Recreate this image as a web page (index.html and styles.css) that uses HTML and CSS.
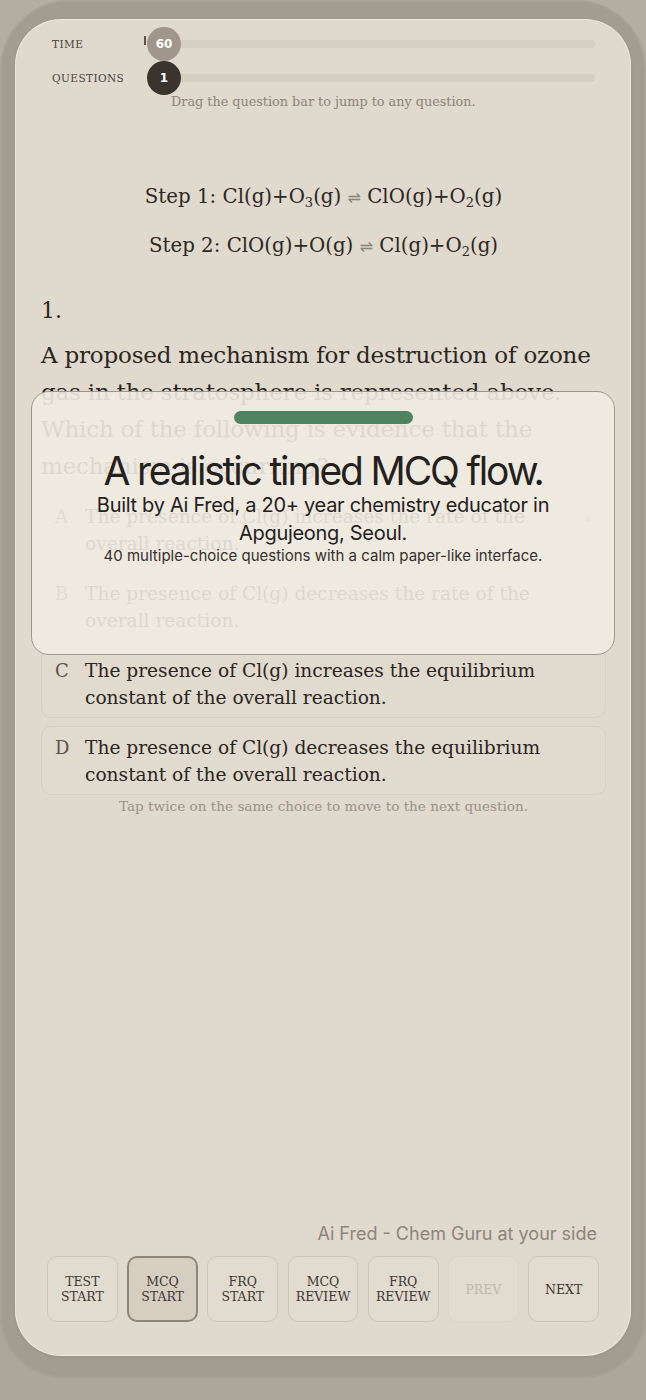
FILE: index.html
```html
<!DOCTYPE html>
<html lang="en">
<head>
<meta charset="utf-8">
<title>MCQ Flow</title>
<link rel="stylesheet" href="styles.css">
</head>
<body>
<div class="shell">
  <main class="card">
    <section class="meters">
      <div class="meter-row">
        <span class="meter-label">Time</span>
        <div class="track"><span class="tick"></span><span class="thumb thumb-time">60</span></div>
      </div>
      <div class="meter-row">
        <span class="meter-label">Questions</span>
        <div class="track"><span class="thumb thumb-q">1</span></div>
      </div>
      <p class="hint">Drag the question bar to jump to any question.</p>
    </section>

    <section class="equations">
      <p>Step 1: Cl(g)+O<sub>3</sub>(g) <span class="eq">&#8652;</span> ClO(g)+O<sub>2</sub>(g)</p>
      <p>Step 2: ClO(g)+O(g) <span class="eq">&#8652;</span> Cl(g)+O<sub>2</sub>(g)</p>
    </section>

    <p class="qnum">1.</p>
    <p class="qtext">A proposed mechanism for destruction of ozone gas in the stratosphere is represented above. Which of the following is evidence that the mechanism is occurring?</p>

    <ul class="choices">
      <li class="choice"><span class="letter">A</span><span class="ctext">The presence of Cl(g) increases the rate of the overall reaction.</span><span class="dot"></span></li>
      <li class="choice"><span class="letter">B</span><span class="ctext">The presence of Cl(g) decreases the rate of the overall reaction.</span></li>
      <li class="choice"><span class="letter">C</span><span class="ctext">The presence of Cl(g) increases the equilibrium constant of the overall reaction.</span></li>
      <li class="choice"><span class="letter">D</span><span class="ctext">The presence of Cl(g) decreases the equilibrium constant of the overall reaction.</span></li>
    </ul>
    <p class="tap">Tap twice on the same choice to move to the next question.</p>

    <footer class="foot">
      <p class="brand">Ai Fred - Chem Guru at your side</p>
      <nav class="buttons">
        <button class="btn">Test<br>Start</button>
        <button class="btn active">MCQ<br>Start</button>
        <button class="btn">FRQ<br>Start</button>
        <button class="btn">MCQ<br>Review</button>
        <button class="btn">FRQ<br>Review</button>
        <button class="btn disabled">Prev</button>
        <button class="btn">Next</button>
      </nav>
    </footer>

    <div class="overlay">
      <div class="bar"></div>
      <h1 class="o-title">A realistic timed MCQ flow.</h1>
      <p class="o-sub">Built by Ai Fred, a 20+ year chemistry educator in Apgujeong, Seoul.</p>
      <p class="o-small">40 multiple-choice questions with a calm paper-like interface.</p>
    </div>
  </main>
</div>
</body>
</html>
```
FILE: styles.css
```css
* { box-sizing: border-box; }
html, body { margin: 0; padding: 0; }
body {
  width: 646px;
  height: 1400px;
  background: linear-gradient(180deg, #b4ada2 0%, #aca599 60%, #ada69a 100%);
  font-family: "DejaVu Serif", "Liberation Serif", serif;
  color: #2d2824;
  overflow: hidden;
}
p { margin: 0; }

.shell {
  width: 646px;
  height: 1378px;
  background: #a39c90;
  border-radius: 0 0 62px 62px;
  border-top-left-radius: 70px;
  border-top-right-radius: 70px;
  padding: 19px 15px 22px 15px;
  box-shadow: inset 0 0 0 2px rgba(255,255,255,0.06);
}

.card {
  position: relative;
  height: 1337px;
  background: #e0d9cd;
  border-radius: 46px;
  padding: 8px 25px 34px 26px;
  display: flex;
  flex-direction: column;
  box-shadow: inset 0 0 0 1px rgba(255,255,255,0.35), 0 1px 3px rgba(0,0,0,0.08);
}

/* meters */
.meters { padding-left: 11px; }
.meter-row {
  display: grid;
  grid-template-columns: 93px 1fr;
  align-items: center;
  height: 34px;
}
.meter-label {
  font-size: 10.5px;
  text-transform: uppercase;
  letter-spacing: 0.04em;
  color: #4a433d;
}
.track {
  position: relative;
  height: 8px;
  margin-left: 4px;
  margin-right: 11px;
  border-radius: 4px;
  background: #d5cec2;
}
.tick {
  position: absolute;
  left: -5px;
  top: -4px;
  width: 2px;
  height: 9px;
  background: #5d554d;
}
.thumb {
  position: absolute;
  left: -2px;
  top: 50%;
  width: 34px;
  height: 34px;
  margin-top: -17px;
  border-radius: 50%;
  display: flex;
  align-items: center;
  justify-content: center;
  color: #fff;
  font-family: "DejaVu Sans", "Liberation Sans", sans-serif;
  font-weight: bold;
  font-size: 12px;
}
.thumb-time { background: #a1968b; }
.thumb-q { background: #3b332e; }
.hint {
  margin-left: 119px;
  font-size: 12.8px;
  line-height: 14px;
  color: #8c847a;
}

/* equations */
.equations {
  margin-top: 64px;
  text-align: center;
  font-size: 19.8px;
  line-height: 48px;
  color: #2d2824;
}
.equations sub { font-size: 13px; line-height: 0; vertical-align: -4px; }
.eq { color: #8a837a; font-family: "DejaVu Sans", sans-serif; font-size: 16px; }

.qnum {
  margin-top: 25px;
  font-size: 22px;
  line-height: 30px;
}
.qtext {
  margin-top: 11px;
  font-size: 23px;
  line-height: 37px;
  letter-spacing: -0.2px;
  color: #2a2521;
}

/* choices */
.choices {
  list-style: none;
  margin: 10px 0 0 0;
  padding: 0;
  display: flex;
  flex-direction: column;
  gap: 8px;
}
.choice {
  display: flex;
  align-items: flex-start;
  height: 69px;
  padding: 7px 13px;
  border: 1px solid #d6cfc3;
  border-radius: 10px;
  background: #e1dace;
}
.letter {
  width: 30px;
  flex: none;
  font-size: 18px;
  line-height: 27px;
  color: #5a524a;
}
.ctext {
  flex: 1;
  font-size: 18.6px;
  line-height: 27px;
  color: #2a2521;
  padding-right: 10px;
}
.dot {
  flex: none;
  width: 6px;
  height: 6px;
  margin-top: 13px;
  margin-right: 1px;
  border-radius: 50%;
  background: #b9b1a6;
}
.tap {
  margin-top: 3px;
  text-align: center;
  font-size: 13.6px;
  line-height: 16px;
  color: #9a9288;
}

/* footer */
.foot { margin-top: auto; }
.brand {
  text-align: right;
  padding-right: 9px;
  font-family: Inter, "Liberation Sans", sans-serif;
  font-size: 18px;
  line-height: 20px;
  color: #8d857b;
}
.buttons {
  margin: 12px 7px 0 6px;
  display: grid;
  grid-template-columns: repeat(7, 1fr);
  gap: 9.5px;
}
.btn {
  height: 66px;
  padding: 0;
  border: 1px solid #cdc5b9;
  border-radius: 10px;
  background: #e2dbcf;
  font-family: "DejaVu Serif", "Liberation Serif", serif;
  font-size: 12.5px;
  line-height: 15px;
  text-transform: uppercase;
  color: #3f3833;
}
.btn.active {
  background: #d6cec1;
  border: 2px solid #8f867b;
}
.btn.disabled {
  color: #bfb7ac;
  border-color: #dbd4c8;
}

/* overlay */
.overlay {
  position: absolute;
  left: 16px;
  top: 372px;
  width: 584px;
  height: 264px;
  padding-top: 19px;
  border: 1px solid #9d968b;
  border-radius: 18px;
  background: rgba(239, 235, 226, 0.9);
  text-align: center;
  font-family: Inter, "Liberation Sans", sans-serif;
  color: #24201d;
}
.bar {
  width: 179px;
  height: 13px;
  margin: 0 auto;
  border-radius: 7px;
  background: #4e8462;
}
.o-title {
  margin: 27px 0 0 0;
  font-size: 39px;
  line-height: 40px;
  font-weight: 400;
  letter-spacing: -0.055em;
}
.o-sub {
  margin: 0 auto;
  width: 480px;
  font-size: 20px;
  line-height: 28px;
  letter-spacing: -0.015em;
}
.o-small {
  font-size: 15px;
  line-height: 18px;
  letter-spacing: 0;
  color: #35302b;
}
```
